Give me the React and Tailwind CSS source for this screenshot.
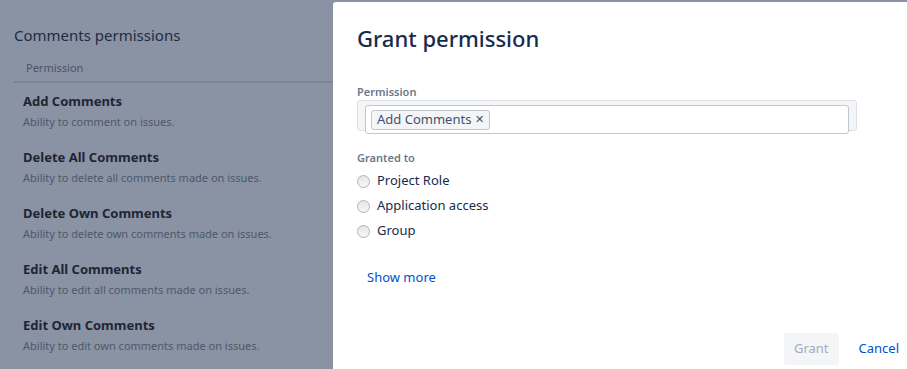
const rows = [
  { name: "Add Comments", desc: "Ability to comment on issues." },
  { name: "Delete All Comments", desc: "Ability to delete all comments made on issues." },
  { name: "Delete Own Comments", desc: "Ability to delete own comments made on issues." },
  { name: "Edit All Comments", desc: "Ability to edit all comments made on issues." },
  { name: "Edit Own Comments", desc: "Ability to edit own comments made on issues." },
];

const options = ["Project Role", "Application access", "Group"];

function Radio() {
  return (
    <span className="w-[13px] h-[13px] rounded-full border border-[#b3b3b3] bg-gradient-to-b from-[#e6e6e6] to-[#f7f7f7] shrink-0" />
  );
}

export default function App() {
  return (
    <div
      className="w-[907px] h-[369px] overflow-hidden flex bg-[#8993a4]"
      style={{ fontFamily: '"Segoe UI", "Noto Sans", sans-serif' }}
    >
      {/* backdrop page */}
      <div className="w-[333px] shrink-0 pt-[24px]">
        <h2 className="pl-[14px] text-[15px] leading-[22px] text-[#1f2b45]">Comments permissions</h2>
        <div className="ml-[14px] mt-[15px] pl-[12px] pb-[6px] border-b-2 border-[#7a8496] text-[11px] leading-[14px] text-[#4b5568]">
          Permission
        </div>
        <div className="pl-[23px] pt-[9px]">
          {rows.map((r) => (
            <div key={r.name} className="h-[56px]">
              <div className="text-[13px] leading-[18px] font-bold text-[#1f2533]">{r.name}</div>
              <div className="mt-[5px] text-[11px] leading-[14px] text-[#4e586a]">{r.desc}</div>
            </div>
          ))}
        </div>
      </div>

      {/* dialog */}
      <div className="flex-1 mt-[2px] bg-white rounded-tl-[3px] flex flex-col">
        <div className="px-[24px] pt-[22px] flex-1">
          <h1 className="text-[22px] leading-[28px] font-medium text-[#172b4d]">Grant permission</h1>

          <div className="mt-[33px] text-[11px] leading-[14px] font-semibold text-[#6b778c]">Permission</div>
          <div className="mt-[1px] w-[500px] h-[31px] bg-[#f4f5f7] border border-[#dfe1e6] rounded-[3px] pl-[7px] pt-[4px]">
            <div className="w-[484px] h-[29px] bg-white border border-[#c1c7d0] rounded-[3px] flex items-center pl-[5px]">
              <span className="h-[20px] flex items-center gap-[4px] px-[5px] bg-[#f4f5f7] border border-[#c1c7d0] rounded-[3px] text-[13px] text-[#42526e]">
                Add Comments
                <span className="text-[11px] text-[#42526e]">✕</span>
              </span>
            </div>
          </div>

          <div className="mt-[20px] text-[11px] leading-[14px] font-semibold text-[#6b778c]">Granted to</div>
          <div className="mt-[7px] flex flex-col gap-[7px]">
            {options.map((o) => (
              <label key={o} className="flex items-center gap-[7px] h-[18px] text-[13px] text-[#172b4d]">
                <Radio />
                {o}
              </label>
            ))}
          </div>

          <a className="block mt-[28px] ml-[10px] text-[13px] leading-[18px] text-[#0052cc]">Show more</a>
        </div>

        <div className="flex items-center justify-end gap-[20px] pr-[8px] pb-[4px]">
          <button className="h-[32px] px-[10px] rounded-[3px] bg-[#f4f5f7] text-[13px] text-[#a5adba]">Grant</button>
          <a className="text-[13px] text-[#0052cc]">Cancel</a>
        </div>
      </div>
    </div>
  );
}
